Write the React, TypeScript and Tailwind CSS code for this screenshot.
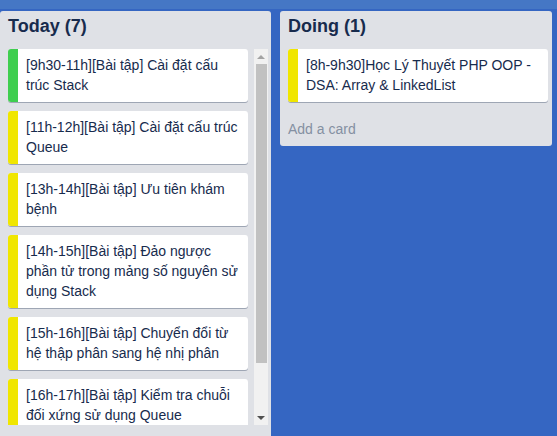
import React from "react";

type Card = { text: string; color: string };

const today: Card[] = [
  { text: "[9h30-11h][Bài tập] Cài đặt cấu trúc Stack", color: "green" },
  { text: "[11h-12h][Bài tập] Cài đặt cấu trúc Queue", color: "yellow" },
  { text: "[13h-14h][Bài tập] Ưu tiên khám bệnh", color: "yellow" },
  { text: "[14h-15h][Bài tập] Đảo ngược phần tử trong mảng số nguyên sử dụng Stack", color: "yellow" },
  { text: "[15h-16h][Bài tập] Chuyển đổi từ hệ thập phân sang hệ nhị phân", color: "yellow" },
  { text: "[16h-17h][Bài tập] Kiểm tra chuỗi đối xứng sử dụng Queue", color: "yellow" },
];

function CardView({ card }: { card: Card }) {
  return (
    <div className="flex bg-white rounded-[3px] shadow-[0_1px_0_rgba(9,30,66,0.3)] shrink-0">
      <div
        className={
          card.color === "green"
            ? "w-[10px] shrink-0 rounded-l-[3px] bg-[#3fce4f]"
            : "w-[10px] shrink-0 rounded-l-[3px] bg-[#f0e600]"
        }
      />
      <div className="flex-1 pl-2 pr-2 pt-[6px] pb-[7px] text-[14px] leading-[20px] text-[#172b4d]">{card.text}</div>
    </div>
  );
}

export default function App() {
  return (
    <div
      className="w-[557px] h-[436px] overflow-hidden bg-[#3566c2] flex flex-col"
      style={{ fontFamily: '"Liberation Sans", Arial, sans-serif' }}
    >
      <div className="h-[9px] bg-[#4577c5] shrink-0" />
      <div className="flex gap-[9px] pt-[2px] items-start">
        <div className="w-[271px] h-[440px] bg-[#dfe1e6] rounded-[3px] flex flex-col shrink-0">
          <div className="h-[38px] px-2 pt-[4px] text-[18px] leading-[22px] font-bold text-[#172b4d] shrink-0">
            Today (7)
          </div>
          <div className="flex pl-2 pr-[3px] h-[376px]">
            <div className="w-[240px] h-[376px] overflow-hidden flex flex-col gap-[9px]">
              {today.map((c, i) => (
                <CardView key={i} card={c} />
              ))}
            </div>
            <div className="ml-[6px] w-[14px] h-[376px] bg-[#f1f1f1] flex flex-col items-center">
              <div className="h-[15px] flex items-center justify-center">
                <div className="w-0 h-0 border-l-[4px] border-r-[4px] border-b-[4px] border-l-transparent border-r-transparent border-b-[#a3a3a3]" />
              </div>
              <div className="mt-0 w-[11px] h-[299px] bg-[#c1c1c1]" />
              <div className="flex-1" />
              <div className="h-[15px] flex items-center justify-center">
                <div className="w-0 h-0 border-l-[4px] border-r-[4px] border-t-[4px] border-l-transparent border-r-transparent border-t-[#505050]" />
              </div>
            </div>
          </div>
        </div>
        <div className="w-[272px] bg-[#dfe1e6] rounded-[3px] flex flex-col shrink-0">
          <div className="h-[38px] px-2 pt-[4px] text-[18px] leading-[22px] font-bold text-[#172b4d]">Doing (1)</div>
          <div className="pl-2 pr-1">
            <CardView card={{ text: "[8h-9h30]Học Lý Thuyết PHP OOP - DSA: Array & LinkedList", color: "yellow" }} />
          </div>
          <div className="px-2 pt-[17px] pb-[7px] text-[14px] leading-[20px] text-[#8590a2]">Add a card</div>
        </div>
      </div>
    </div>
  );
}
